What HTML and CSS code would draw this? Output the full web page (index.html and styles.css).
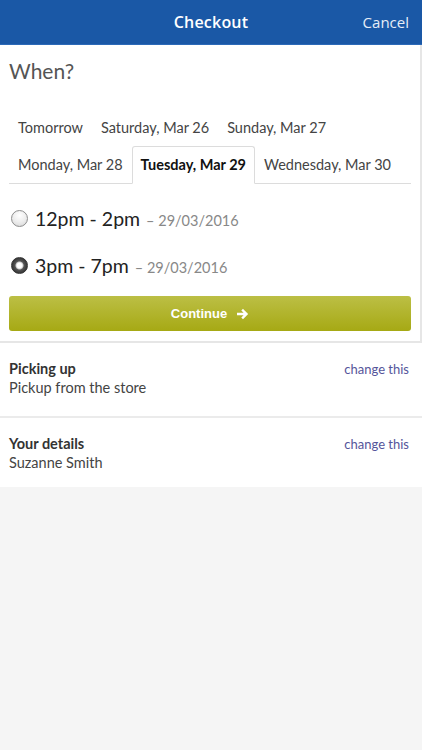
FILE: index.html
```html
<!DOCTYPE html>
<html>
<head>
<meta charset="utf-8">
<link rel="stylesheet" href="styles.css">
</head>
<body>
<header class="topbar">
  <div class="title">Checkout</div>
  <div class="cancel">Cancel</div>
</header>
<section class="card">
  <h2 class="when">When?</h2>
  <div class="tabs">
    <div class="tabrow">
      <span class="tab">Tomorrow</span>
      <span class="tab">Saturday, Mar 26</span>
      <span class="tab">Sunday, Mar 27</span>
    </div>
    <div class="tabrow line">
      <span class="tab">Monday, Mar 28</span>
      <span class="tab active">Tuesday, Mar 29</span>
      <span class="tab">Wednesday, Mar 30</span>
    </div>
  </div>
  <div class="slots">
    <label class="slot"><span class="radio"></span><span class="time">12pm - 2pm</span><span class="date">– 29/03/2016</span></label>
    <label class="slot"><span class="radio on"></span><span class="time">3pm - 7pm</span><span class="date">– 29/03/2016</span></label>
  </div>
  <button class="continue">Continue <svg width="12" height="12" viewBox="0 0 12 12"><path d="M1 6h8M6 2.5 9.5 6 6 9.5" stroke="#fff" stroke-width="2.4" fill="none" stroke-linecap="square"/></svg></button>
</section>
<section class="info">
  <div class="row">
    <div>
      <div class="label">Picking up</div>
      <div class="value">Pickup from the store</div>
    </div>
    <a class="change">change this</a>
  </div>
  <div class="row">
    <div>
      <div class="label">Your details</div>
      <div class="value">Suzanne Smith</div>
    </div>
    <a class="change">change this</a>
  </div>
</section>
</body>
</html>
```
FILE: styles.css
```css
* { box-sizing: border-box; }
html, body { margin: 0; padding: 0; }
body {
  background: #f5f5f5;
  font-family: Lato, "Open Sans", sans-serif;
  color: #333;
  width: 422px;
  height: 750px;
  overflow: hidden;
}
.topbar {
  height: 45px;
  background: #1a58a6;
  border-bottom: 1px solid #2c6ab8;
  display: flex;
  align-items: center;
  justify-content: center;
  position: relative;
  color: #fff;
}
.title {
  font-family: "Open Sans", sans-serif;
  font-weight: 600;
  font-size: 16px;
  letter-spacing: 0.2px;
}
.cancel {
  position: absolute;
  right: 13px;
  top: 12px;
  font-family: "Open Sans", sans-serif;
  font-size: 15px;
  color: #e6edf7;
}
.card {
  background: #fff;
  border-right: 2px solid #e6e6e6;
  border-bottom: 2px solid #e6e6e6;
  padding: 12px 9px 10px 9px;
}
.when {
  margin: 0;
  font-weight: 400;
  font-size: 21px;
  color: #555;
  line-height: 28px;
}
.tabs { margin-top: 25px; }
.tabrow {
  display: flex;
  align-items: flex-end;
}
.tabrow.line { border-bottom: 1px solid #dcdcdc; }
.tab {
  font-size: 14.5px;
  color: #444;
  padding: 8px 9px 9px 9px;
  line-height: 19px;
}
.tabrow.line .tab { padding: 9px 9px 9px 9px; }
.tabrow.line .tab.active {
  font-weight: 700;
  color: #111;
  border: 1px solid #dcdcdc;
  border-bottom: 1px solid #fff;
  margin-bottom: -1px;
  border-radius: 3px 3px 0 0;
  padding: 8px 8px 9px 8px;
}
.slots { padding-top: 11px; }
.slot {
  display: flex;
  align-items: center;
  height: 47px;
  padding-left: 2px;
}
.radio {
  width: 17px;
  height: 17px;
  border-radius: 50%;
  border: 1px solid #8e8e8e;
  background: radial-gradient(circle at 50% 30%, #fff 0%, #eee 50%, #d4d4d4 100%);
  margin-right: 7px;
}
.radio.on {
  border-color: #333;
  background: radial-gradient(circle at 50% 50%, #fff 0 2.5px, #ccc 3.5px, #555 4.5px, #333 8px);
}
.time {
  font-size: 19.5px;
  color: #222;
  margin-right: 6px;
}
.date {
  font-size: 14.5px;
  color: #888;
  margin-top: 3px;
}
.continue {
  display: flex;
  align-items: center;
  justify-content: center;
  gap: 10px;
  width: 100%;
  height: 35px;
  margin-top: 7px;
  border: none;
  border-radius: 3px;
  background: linear-gradient(#bcbf45, #a6a914);
  color: #fff;
  font-family: "Liberation Sans", Arial, sans-serif;
  font-weight: 700;
  font-size: 13px;
}
.info { background: #fff; }
.row {
  display: flex;
  justify-content: space-between;
  align-items: flex-start;
  padding: 17px 13px 0 9px;
  height: 75px;
  border-bottom: 2px solid #ebebeb;
}
.row:last-child { border-bottom: none; height: 69px; }
.label {
  font-weight: 700;
  font-size: 14.5px;
  color: #333;
  line-height: 18px;
}
.value {
  font-size: 14.5px;
  color: #444;
  line-height: 19px;
}
.change {
  font-size: 13px;
  color: #55559a;
  margin-top: 1px;
}
```
